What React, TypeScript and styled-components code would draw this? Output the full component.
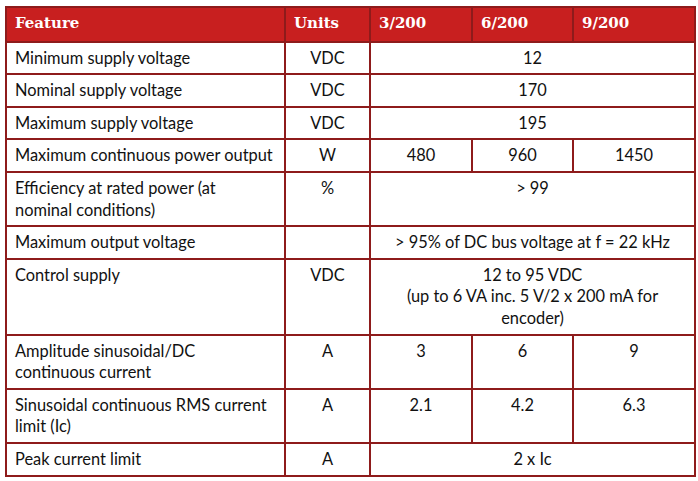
import styled, { createGlobalStyle } from 'styled-components';

const GlobalStyle = createGlobalStyle`
  html, body {
    margin: 0;
    background: #ffffff;
  }
  body {
    font-family: Lato, 'Open Sans', sans-serif;
    color: #111111;
  }
`;

const BORDER = '#8e1b1b';

const Page = styled.div`
  padding: 6px 0 0 5px;
`;

const Table = styled.table`
  border-collapse: collapse;
  table-layout: fixed;
  width: 689px;
  font-size: 16.4px;
  line-height: 21.6px;
`;

const Col = styled.col<{ $w: number }>`
  width: ${(p) => p.$w}px;
`;

const HeadCell = styled.th`
  background: #c81f1f;
  color: #ffffff;
  font-family: 'DejaVu Serif', 'Liberation Serif', serif;
  font-weight: bold;
  font-size: 15px;
  text-align: left;
  vertical-align: top;
  padding: 5px 8px 6px;
  border: 2px solid ${BORDER};
`;

const Cell = styled.td<{ $align?: 'left' | 'center' }>`
  text-align: ${(p) => p.$align || 'center'};
  vertical-align: top;
  padding: 4px 8px 5px;
  border: 2px solid ${BORDER};
  white-space: pre-line;
`;

type Row = { feature: string; unit: string; values: string[] };

const rows: Row[] = [
  { feature: 'Minimum supply voltage', unit: 'VDC', values: ['12'] },
  { feature: 'Nominal supply voltage', unit: 'VDC', values: ['170'] },
  { feature: 'Maximum supply voltage', unit: 'VDC', values: ['195'] },
  { feature: 'Maximum continuous power output', unit: 'W', values: ['480', '960', '1450'] },
  { feature: 'Efficiency at rated power (at\nnominal conditions)', unit: '%', values: ['> 99'] },
  { feature: 'Maximum output voltage', unit: '', values: ['> 95% of DC bus voltage at f = 22 kHz'] },
  {
    feature: 'Control supply',
    unit: 'VDC',
    values: ['12 to 95 VDC\n(up to 6 VA inc. 5 V/2 x 200 mA for\nencoder)'],
  },
  { feature: 'Amplitude sinusoidal/DC\ncontinuous current', unit: 'A', values: ['3', '6', '9'] },
  { feature: 'Sinusoidal continuous RMS current\nlimit (Ic)', unit: 'A', values: ['2.1', '4.2', '6.3'] },
  { feature: 'Peak current limit', unit: 'A', values: ['2 x Ic'] },
];

export default function App() {
  return (
    <Page>
      <GlobalStyle />
      <Table>
        <colgroup>
          <Col $w={279} />
          <Col $w={85} />
          <Col $w={102} />
          <Col $w={101} />
          <Col $w={122} />
        </colgroup>
        <thead>
          <tr>
            <HeadCell>Feature</HeadCell>
            <HeadCell>Units</HeadCell>
            <HeadCell>3/200</HeadCell>
            <HeadCell>6/200</HeadCell>
            <HeadCell>9/200</HeadCell>
          </tr>
        </thead>
        <tbody>
          {rows.map((r) => (
            <tr key={r.feature}>
              <Cell $align="left">{r.feature}</Cell>
              <Cell>{r.unit}</Cell>
              {r.values.length === 1 ? (
                <Cell colSpan={3}>{r.values[0]}</Cell>
              ) : (
                r.values.map((v) => <Cell key={v}>{v}</Cell>)
              )}
            </tr>
          ))}
        </tbody>
      </Table>
    </Page>
  );
}
